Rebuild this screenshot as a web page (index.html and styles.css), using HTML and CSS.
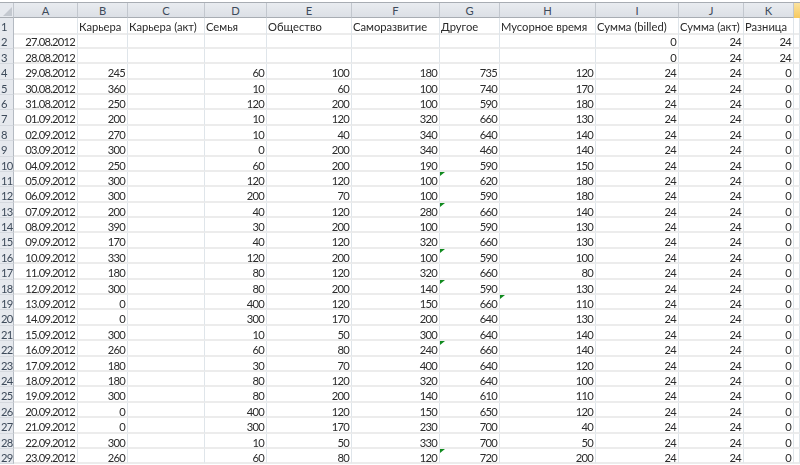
FILE: index.html
```html
<!DOCTYPE html>
<html lang="ru">
<head>
<meta charset="utf-8">
<title>Таблица</title>
<link rel="stylesheet" href="styles.css">
</head>
<body>
<div class="sheet">
<div class="row head"><span class="corner"></span><span>A</span><span>B</span><span>C</span><span>D</span><span>E</span><span>F</span><span>G</span><span>H</span><span>I</span><span>J</span><span>K</span><span class="sel"></span></div>
<div class="row"><b>1</b><i></i><i class="t">Карьера</i><i class="t">Карьера (акт)</i><i class="t">Семья</i><i class="t">Общество</i><i class="t">Саморазвитие</i><i class="t">Другое</i><i class="t">Мусорное время</i><i class="t">Сумма (billed)</i><i class="t">Сумма (акт)</i><i class="t">Разница</i><i></i></div>
<div class="row"><b>2</b><i>27.08.2012</i><i></i><i></i><i></i><i></i><i></i><i></i><i></i><i>0</i><i>24</i><i>24</i><i></i></div>
<div class="row"><b>3</b><i>28.08.2012</i><i></i><i></i><i></i><i></i><i></i><i></i><i></i><i>0</i><i>24</i><i>24</i><i></i></div>
<div class="row"><b>4</b><i>29.08.2012</i><i>245</i><i></i><i>60</i><i>100</i><i>180</i><i>735</i><i>120</i><i>24</i><i>24</i><i>0</i><i></i></div>
<div class="row"><b>5</b><i>30.08.2012</i><i>360</i><i></i><i>10</i><i>60</i><i>100</i><i>740</i><i>170</i><i>24</i><i>24</i><i>0</i><i></i></div>
<div class="row"><b>6</b><i>31.08.2012</i><i>250</i><i></i><i>120</i><i>200</i><i>100</i><i>590</i><i>180</i><i>24</i><i>24</i><i>0</i><i></i></div>
<div class="row"><b>7</b><i>01.09.2012</i><i>200</i><i></i><i>10</i><i>120</i><i>320</i><i>660</i><i>130</i><i>24</i><i>24</i><i>0</i><i></i></div>
<div class="row"><b>8</b><i>02.09.2012</i><i>270</i><i></i><i>10</i><i>40</i><i>340</i><i>640</i><i>140</i><i>24</i><i>24</i><i>0</i><i></i></div>
<div class="row"><b>9</b><i>03.09.2012</i><i>300</i><i></i><i>0</i><i>200</i><i>340</i><i>460</i><i>140</i><i>24</i><i>24</i><i>0</i><i></i></div>
<div class="row"><b>10</b><i>04.09.2012</i><i>250</i><i></i><i>60</i><i>200</i><i>190</i><i>590</i><i>150</i><i>24</i><i>24</i><i>0</i><i></i></div>
<div class="row"><b>11</b><i>05.09.2012</i><i>300</i><i></i><i>120</i><i>120</i><i>100</i><i class="note">620</i><i>180</i><i>24</i><i>24</i><i>0</i><i></i></div>
<div class="row"><b>12</b><i>06.09.2012</i><i>300</i><i></i><i>200</i><i>70</i><i>100</i><i>590</i><i>180</i><i>24</i><i>24</i><i>0</i><i></i></div>
<div class="row"><b>13</b><i>07.09.2012</i><i>200</i><i></i><i>40</i><i>120</i><i>280</i><i class="note">660</i><i>140</i><i>24</i><i>24</i><i>0</i><i></i></div>
<div class="row"><b>14</b><i>08.09.2012</i><i>390</i><i></i><i>30</i><i>200</i><i>100</i><i>590</i><i>130</i><i>24</i><i>24</i><i>0</i><i></i></div>
<div class="row"><b>15</b><i>09.09.2012</i><i>170</i><i></i><i>40</i><i>120</i><i>320</i><i>660</i><i>130</i><i>24</i><i>24</i><i>0</i><i></i></div>
<div class="row"><b>16</b><i>10.09.2012</i><i>330</i><i></i><i>120</i><i>200</i><i>100</i><i class="note">590</i><i>100</i><i>24</i><i>24</i><i>0</i><i></i></div>
<div class="row"><b>17</b><i>11.09.2012</i><i>180</i><i></i><i>80</i><i>120</i><i>320</i><i>660</i><i>80</i><i>24</i><i>24</i><i>0</i><i></i></div>
<div class="row"><b>18</b><i>12.09.2012</i><i>300</i><i></i><i>80</i><i>200</i><i>140</i><i class="note">590</i><i>130</i><i>24</i><i>24</i><i>0</i><i></i></div>
<div class="row"><b>19</b><i>13.09.2012</i><i>0</i><i></i><i>400</i><i>120</i><i>150</i><i>660</i><i class="note">110</i><i>24</i><i>24</i><i>0</i><i></i></div>
<div class="row"><b>20</b><i>14.09.2012</i><i>0</i><i></i><i>300</i><i>170</i><i>200</i><i>640</i><i>130</i><i>24</i><i>24</i><i>0</i><i></i></div>
<div class="row"><b>21</b><i>15.09.2012</i><i>300</i><i></i><i>10</i><i>50</i><i>300</i><i>640</i><i>140</i><i>24</i><i>24</i><i>0</i><i></i></div>
<div class="row"><b>22</b><i>16.09.2012</i><i>260</i><i></i><i>60</i><i>80</i><i>240</i><i class="note">660</i><i>140</i><i>24</i><i>24</i><i>0</i><i></i></div>
<div class="row"><b>23</b><i>17.09.2012</i><i>180</i><i></i><i>30</i><i>70</i><i>400</i><i>640</i><i>120</i><i>24</i><i>24</i><i>0</i><i></i></div>
<div class="row"><b>24</b><i>18.09.2012</i><i>180</i><i></i><i>80</i><i>120</i><i>320</i><i>640</i><i>100</i><i>24</i><i>24</i><i>0</i><i></i></div>
<div class="row"><b>25</b><i>19.09.2012</i><i>300</i><i></i><i>80</i><i>200</i><i>140</i><i>610</i><i>110</i><i>24</i><i>24</i><i>0</i><i></i></div>
<div class="row"><b>26</b><i>20.09.2012</i><i>0</i><i></i><i>400</i><i>120</i><i>150</i><i>650</i><i>120</i><i>24</i><i>24</i><i>0</i><i></i></div>
<div class="row"><b>27</b><i>21.09.2012</i><i>0</i><i></i><i>300</i><i>170</i><i>230</i><i>700</i><i>40</i><i>24</i><i>24</i><i>0</i><i></i></div>
<div class="row"><b>28</b><i>22.09.2012</i><i>300</i><i></i><i>10</i><i>50</i><i>330</i><i>700</i><i>50</i><i>24</i><i>24</i><i>0</i><i></i></div>
<div class="row"><b>29</b><i>23.09.2012</i><i>260</i><i></i><i>60</i><i>80</i><i>120</i><i class="note">720</i><i>200</i><i>24</i><i>24</i><i>0</i><i></i></div>
</div>
</body>
</html>
```
FILE: styles.css
```css
html, body {
  margin: 0;
  height: 100%;
  overflow: hidden;
  background: #fff;
}
.sheet {
  height: 465px;
  overflow: hidden;
  padding-top: 2px;
  box-sizing: border-box;
  font: 11.2px/13px Lato, "Noto Sans", sans-serif;
  color: #2a2a2a;
  filter: blur(0.4px);
}
.row {
  display: grid;
  grid-template-columns: 14px 64px 50px 77px 62px 85px 88px 60px 96px 83px 65px 50px 6px;
  height: 15.4px;
}
.row > * {
  font: inherit;
  box-sizing: border-box;
  white-space: nowrap;
  overflow: hidden;
  padding-top: 2px;
}
.row > i {
  text-align: right;
  padding-right: 2px;
  letter-spacing: -0.75px;
  border-right: 1px solid #dfe5ea;
  border-bottom: 2px solid #ececec;
}
.row > i.t {
  text-align: left;
  padding-left: 1px;
  padding-right: 0;
  overflow: visible;
  letter-spacing: 0;
}
.row > b {
  padding-left: 1px;
  color: #3d4a5a;
  background: #e6e9ee;
  letter-spacing: -0.7px;
  border-bottom: 1px solid #d5d9df;
  border-right: 1px solid #b4bac2;
}
.head {
  height: 16px;
  border-top: 1px solid #a8adb3;
  background: linear-gradient(#e9ecf0, #dbdfe5);
  box-sizing: border-box;
}
.row.head > span {
  text-align: center;
  color: #3d4a5a;
  padding-top: 1px;
  border-right: 1px solid #c2c7ce;
  border-bottom: 1px solid #a8adb3;
}
.head > .corner {
  position: relative;
  background: #e6e9ee;
}
.corner::after {
  content: "";
  position: absolute;
  right: 1px;
  bottom: 1px;
  border-style: solid;
  border-width: 0 0 9px 9px;
  border-color: transparent transparent #c3c8cf transparent;
}
.row.head > .sel {
  background: linear-gradient(#fbe3a0, #f6c95e);
  border: 0;
}
.note {
  position: relative;
}
.note::before {
  content: "";
  position: absolute;
  left: 0;
  top: 0;
  border-style: solid;
  border-width: 4px 5px 0 0;
  border-color: #108a1e transparent transparent transparent;
}
```
